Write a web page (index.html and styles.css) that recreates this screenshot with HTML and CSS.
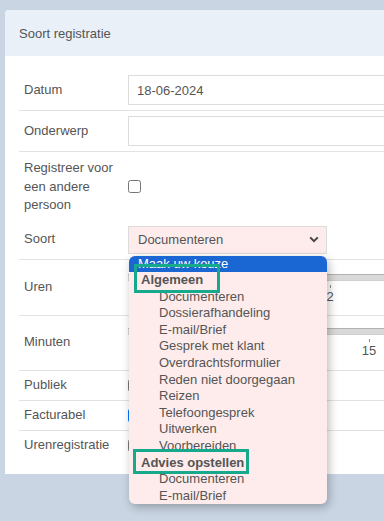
FILE: index.html
```html
<!DOCTYPE html>
<html lang="nl">
  <head>
    <meta name="viewport" content="width=device-width" />
    <title>Soort registratie</title>
    <link rel="stylesheet" href="styles.css">
  </head>
  <body>
    <div class="page">
      <div class="card">
        <div class="card-header">Soort registratie</div>
        <div class="card-body">
          <div class="row row-field">
            <label class="label">Datum</label>
            <input class="field" type="text" value="18-06-2024">
          </div>
          <div class="row row-field">
            <label class="label">Onderwerp</label>
            <input class="field" type="text">
          </div>
          <div class="row row-plain row-other">
            <label class="label">Registreer voor een andere persoon</label>
            <input class="check" type="checkbox">
          </div>
          <div class="row row-select">
            <label class="label">Soort</label>
            <div class="select">
              <span>Documenteren</span>
              <svg width="10" height="7" viewBox="0 0 10 7"><path d="M1.2 1.4 5 5.2 8.8 1.4" fill="none" stroke="#444" stroke-width="2"/></svg>
            </div>
          </div>
          <div class="row row-slider row-hours">
            <label class="label">Uren</label>
            <div class="slider">
              <div class="track"></div>
              <span class="tick" style="left: 202px"></span>
              <span class="tick-label" style="left: 202px">2</span>
            </div>
          </div>
          <div class="row row-slider row-minutes">
            <label class="label">Minuten</label>
            <div class="slider">
              <div class="track"></div>
              <span class="tick" style="left: 241px"></span>
              <span class="tick-label" style="left: 241px">15</span>
            </div>
          </div>
          <div class="row row-check">
            <label class="label">Publiek</label>
            <input class="check" type="checkbox">
          </div>
          <div class="row row-check">
            <label class="label">Facturabel</label>
            <input class="check" type="checkbox" checked>
          </div>
          <div class="row row-check row-last">
            <label class="label">Urenregistratie</label>
            <input class="check" type="checkbox">
          </div>
        </div>
      </div>
    </div>

    <!-- open list of the "Soort" select -->
    <div class="dropdown">
      <ul class="options">
        <li class="opt opt-placeholder">Maak uw keuze</li>
        <li class="opt opt-group">Algemeen</li>
        <li class="opt">Documenteren</li>
        <li class="opt">Dossierafhandeling</li>
        <li class="opt">E-mail/Brief</li>
        <li class="opt">Gesprek met klant</li>
        <li class="opt">Overdrachtsformulier</li>
        <li class="opt">Reden niet doorgegaan</li>
        <li class="opt">Reizen</li>
        <li class="opt">Telefoongesprek</li>
        <li class="opt">Uitwerken</li>
        <li class="opt">Voorbereiden</li>
        <li class="opt opt-group">Advies opstellen</li>
        <li class="opt">Documenteren</li>
        <li class="opt">E-mail/Brief</li>
      </ul>
    </div>

    <div class="highlight highlight-general"></div>
    <div class="highlight highlight-advice"></div>
  </body>
</html>
```

FILE: styles.css
```css
body {
  margin: 0;
  height: 521px;
  overflow: hidden;
  background: #c9d5e3;
  font-family: "Liberation Sans", Arial, sans-serif;
  font-size: 13px;
  color: #555;
}

.page {
  padding: 10px 0 0 5px;
}

.card {
  width: 420px;
  background: #fff;
  border-radius: 4px 4px 0 0;
}

.card-header {
  display: flex;
  align-items: center;
  height: 46px;
  padding-left: 14px;
  background: #e9f0f8;
  border-radius: 4px 4px 0 0;
}

.card-body {
  padding: 14px 0 14px 14px;
}

.row {
  display: flex;
  align-items: center;
  padding-left: 5px;
  border-bottom: 1px solid #e2e2e2;
}

.label {
  flex-shrink: 0;
  width: 104px;
  line-height: 18.5px;
}

/* text inputs */
.row-field {
  padding-top: 5px;
  padding-bottom: 5px;
}

.field {
  flex: 1;
  box-sizing: border-box;
  height: 30px;
  margin: 0;
  padding: 0 8px;
  border: 1px solid #dcdcdc;
  font: inherit;
  color: #555;
  outline: none;
}

.row-plain {
  border-bottom: none;
}

.row-other {
  padding-top: 7px;
  padding-bottom: 3px;
}

.check {
  width: 13px;
  height: 13px;
  margin: 0;
}

/* select */
.row-select {
  padding-top: 8px;
  padding-bottom: 5px;
}

.select {
  display: flex;
  align-items: center;
  justify-content: space-between;
  box-sizing: border-box;
  width: 199px;
  height: 28px;
  padding: 0 7px 0 9px;
  background: #fdeceb;
  border: 1px solid #dcdcdc;
}

/* range sliders */
.row-slider {
  align-items: flex-start;
}

.row-slider .label {
  align-self: center;
}

.row-hours {
  height: 55px;
}

.row-minutes {
  height: 54px;
}

.slider {
  position: relative;
  flex: 1;
  height: 30px;
}

.row-hours .slider {
  margin-top: 14px;
}

.row-minutes .slider {
  margin-top: 12px;
}

.track {
  box-sizing: border-box;
  height: 7px;
  background: #d9d9d9;
  border-top: 1px solid #b2b2b2;
  border-bottom: 1px solid #cfcfcf;
}

.tick {
  position: absolute;
  top: 11px;
  width: 1px;
  height: 3px;
  background: #8a8a8a;
}

.tick-label {
  position: absolute;
  top: 16px;
  transform: translateX(-50%);
  line-height: 14px;
}

.row-check {
  height: 29px;
}

.row-last {
  border-bottom: none;
}

/* open option list */
.dropdown {
  position: absolute;
  left: 129px;
  top: 256px;
  width: 198px;
  height: 248px;
  overflow: hidden;
  background: #fdeceb;
  border-radius: 6px;
  box-shadow: 2px 3px 10px rgba(0, 0, 0, .28);
}

.options {
  margin: -0.5px 0 0;
  padding: 0;
  list-style: none;
}

.opt {
  height: 16.6px;
  line-height: 16.6px;
  padding-left: 30px;
  white-space: nowrap;
}

.opt-placeholder {
  padding-left: 9px;
  background: #1a67d3;
  color: #fff;
}

.opt-group {
  padding-left: 12px;
  font-weight: bold;
}

/* annotation boxes drawn over the list */
.highlight {
  position: absolute;
  box-sizing: border-box;
  border: 3px solid #17a98b;
}

.highlight-general {
  left: 134px;
  top: 264px;
  width: 86px;
  height: 29px;
}

.highlight-advice {
  left: 133px;
  top: 449px;
  width: 116px;
  height: 25px;
}
```
